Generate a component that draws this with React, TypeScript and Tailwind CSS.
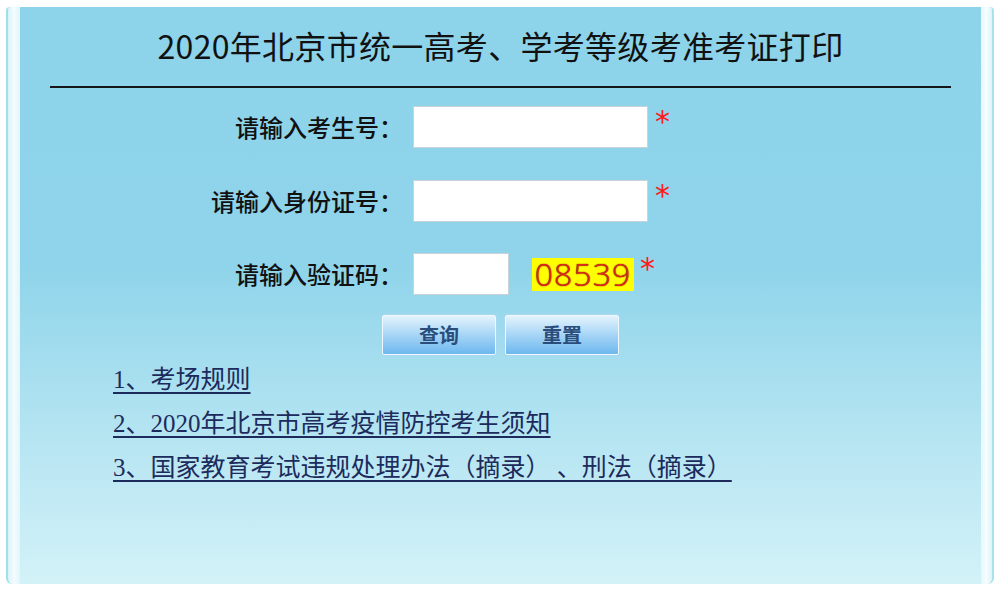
import { useState } from "react";

const cjk = { fontFamily: '"Noto Sans CJK SC", "Noto Sans", sans-serif' };
const serif = { fontFamily: '"Liberation Serif", "Noto Sans CJK SC", serif' };

function Field({
  label,
  width,
  value,
  onChange,
}: {
  label: string;
  width: string;
  value: string;
  onChange: (v: string) => void;
}) {
  return (
    <div className="flex items-center">
      <label className="w-[200px] ml-[183px] text-right text-[24px] leading-[42px] font-medium text-[#111]">
        {label}
      </label>
      <input
        value={value}
        onChange={(e) => onChange(e.target.value)}
        className={`${width} ml-[10px] h-[42px] bg-white border border-[#c9d3d8] outline-none px-2 text-[18px]`}
      />
    </div>
  );
}

function Star({ left }: { left: string }) {
  return (
    <span
      className={`${left} text-[30px] leading-none text-[#ff1a1a] -mt-[10px]`}
      style={{ fontFamily: '"DejaVu Sans", sans-serif' }}
    >
      *
    </span>
  );
}

export default function App() {
  const [ksh, setKsh] = useState("");
  const [sfz, setSfz] = useState("");
  const [yzm, setYzm] = useState("");

  const reset = () => {
    setKsh("");
    setSfz("");
    setYzm("");
  };

  return (
    <div className="w-[1000px] h-[589px] bg-white pt-[7px] px-[6px] overflow-hidden" style={cjk}>
      <div className="flex h-[577px]">
        {/* left frame strip */}
        <div className="w-[14px] rounded-tl-[4px] rounded-bl-[6px] border-l-2 border-[#9fe0ee] bg-gradient-to-r from-[#d9f3f9] via-[#f4fcfe] to-[#e2f6fb]" />

        {/* main panel */}
        <div className="flex-1 flex flex-col bg-[linear-gradient(to_bottom,#8dd3e9_0%,#8fd4ea_45%,#b6e5f2_75%,#d3f2f8_100%)]">
          <h1 className="mt-[18px] text-center text-[32px] leading-[40px] font-normal text-[#111] tracking-[0.3px]">
            2020年北京市统一高考、学考等级考准考证打印
          </h1>
          <div className="mx-[30px] mt-[21px] h-[2px] bg-[#151515]" />

          <div className="mt-[18px] flex flex-col">
            <div className="flex items-center">
              <Field label="请输入考生号：" width="w-[235px]" value={ksh} onChange={setKsh} />
              <Star left="ml-[7px]" />
            </div>

            <div className="mt-[32px] flex items-center">
              <Field label="请输入身份证号：" width="w-[235px]" value={sfz} onChange={setSfz} />
              <Star left="ml-[7px]" />
            </div>

            <div className="mt-[31px] flex items-center">
              <Field label="请输入验证码：" width="w-[96px]" value={yzm} onChange={setYzm} />
              <div
                className="ml-[23px] w-[102px] h-[33px] bg-[#ffff00] flex items-center justify-center text-[32px] leading-none font-light text-[#e3261a] tracking-[1px] [text-shadow:0_0_1px_#7a3510,0_0_1px_#7a3510]"
                style={{ fontFamily: '"Open Sans", "DejaVu Sans", sans-serif' }}
              >
                08539
              </div>
              <Star left="ml-[6px]" />
            </div>
          </div>

          <div className="mt-[20px] flex justify-center gap-[9px]">
            <button
              type="button"
              className="w-[114px] h-[40px] rounded-[2px] border border-[#eef8fe] shadow-[0_0_0_1px_#a9d6f0] bg-gradient-to-b from-[#e4f3fc] via-[#a6d5f6] to-[#6cb8ee] text-[20px] font-bold text-[#2a4d7c]"
            >
              查询
            </button>
            <button
              type="button"
              onClick={reset}
              className="w-[114px] h-[40px] rounded-[2px] border border-[#eef8fe] shadow-[0_0_0_1px_#a9d6f0] bg-gradient-to-b from-[#e4f3fc] via-[#a6d5f6] to-[#6cb8ee] text-[20px] font-bold text-[#2a4d7c]"
            >
              重置
            </button>
          </div>

          <div className="mt-[10px] ml-[93px] flex flex-col gap-[14px] text-[25px] leading-[30px] text-[#1c2b5c]" style={serif}>
            <a href="#" className="w-fit underline underline-offset-[4px]">1、考场规则</a>
            <a href="#" className="w-fit underline underline-offset-[4px]">2、2020年北京市高考疫情防控考生须知</a>
            <a href="#" className="w-fit underline underline-offset-[4px] whitespace-pre">
              3、国家教育考试违规处理办法（摘录） 、刑法（摘录）
            </a>
          </div>
        </div>

        {/* right frame strip */}
        <div className="w-[13px] rounded-tr-[4px] rounded-br-[6px] border-r-2 border-[#a8e2ef] bg-gradient-to-r from-[#e6f7fb] via-[#f6fdfe] to-[#dcf3f9]" />
      </div>
    </div>
  );
}
